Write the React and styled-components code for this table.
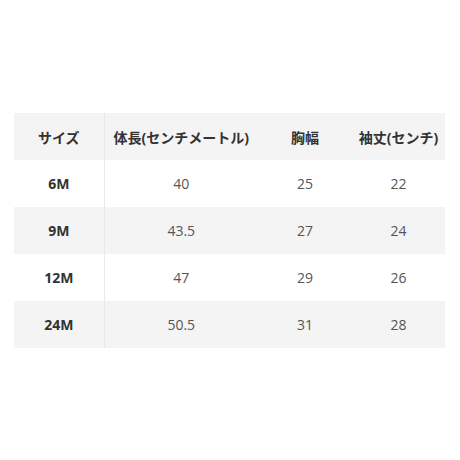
import React from 'react'
import styled, { createGlobalStyle } from 'styled-components'

const GlobalStyle = createGlobalStyle`
  html, body {
    margin: 0;
    padding: 0;
    background: #ffffff;
  }
  body {
    font-family: 'Open Sans', 'Noto Sans CJK JP', sans-serif;
  }
`

const Page = styled.div`
  width: 460px;
  height: 460px;
  padding: 113px 15px 0 14px;
  box-sizing: border-box;
`

const Table = styled.table`
  width: 431px;
  border-collapse: collapse;
  table-layout: fixed;
  font-size: 14px;
`

const Row = styled.tr`
  height: 47px;
  background-color: ${props => (props.shaded ? '#f4f4f4' : '#ffffff')};
`

const Head = styled.th`
  padding: 0;
  font-weight: 700;
  color: #333333;
  text-align: center;
  vertical-align: middle;
  border-right: ${props => (props.divider ? '1px solid #e9e9e9' : 'none')};
`

const Cell = styled.td`
  padding: 0;
  font-weight: ${props => (props.bold ? 700 : 400)};
  color: ${props => (props.bold ? '#333333' : '#555555')};
  text-align: center;
  vertical-align: middle;
  border-right: ${props => (props.divider ? '1px solid #e9e9e9' : 'none')};
`

const columns = [
  { label: 'サイズ', width: 90 },
  { label: '体長(センチメートル)', width: 154 },
  { label: '胸幅', width: 94 },
  { label: '袖丈(センチ)', width: 93 },
]

const rows = [
  ['6M', '40', '25', '22'],
  ['9M', '43.5', '27', '24'],
  ['12M', '47', '29', '26'],
  ['24M', '50.5', '31', '28'],
]

const App = () => (
  <Page>
    <GlobalStyle />
    <Table>
      <colgroup>
        {columns.map(col => (
          <col key={col.label} style={{ width: col.width }} />
        ))}
      </colgroup>
      <thead>
        <Row shaded>
          {columns.map((col, i) => (
            <Head key={col.label} divider={i === 0}>
              {col.label}
            </Head>
          ))}
        </Row>
      </thead>
      <tbody>
        {rows.map((row, r) => (
          <Row key={row[0]} shaded={r % 2 === 1}>
            {row.map((value, i) => (
              <Cell key={i} bold={i === 0} divider={i === 0}>
                {value}
              </Cell>
            ))}
          </Row>
        ))}
      </tbody>
    </Table>
  </Page>
)

export default App
